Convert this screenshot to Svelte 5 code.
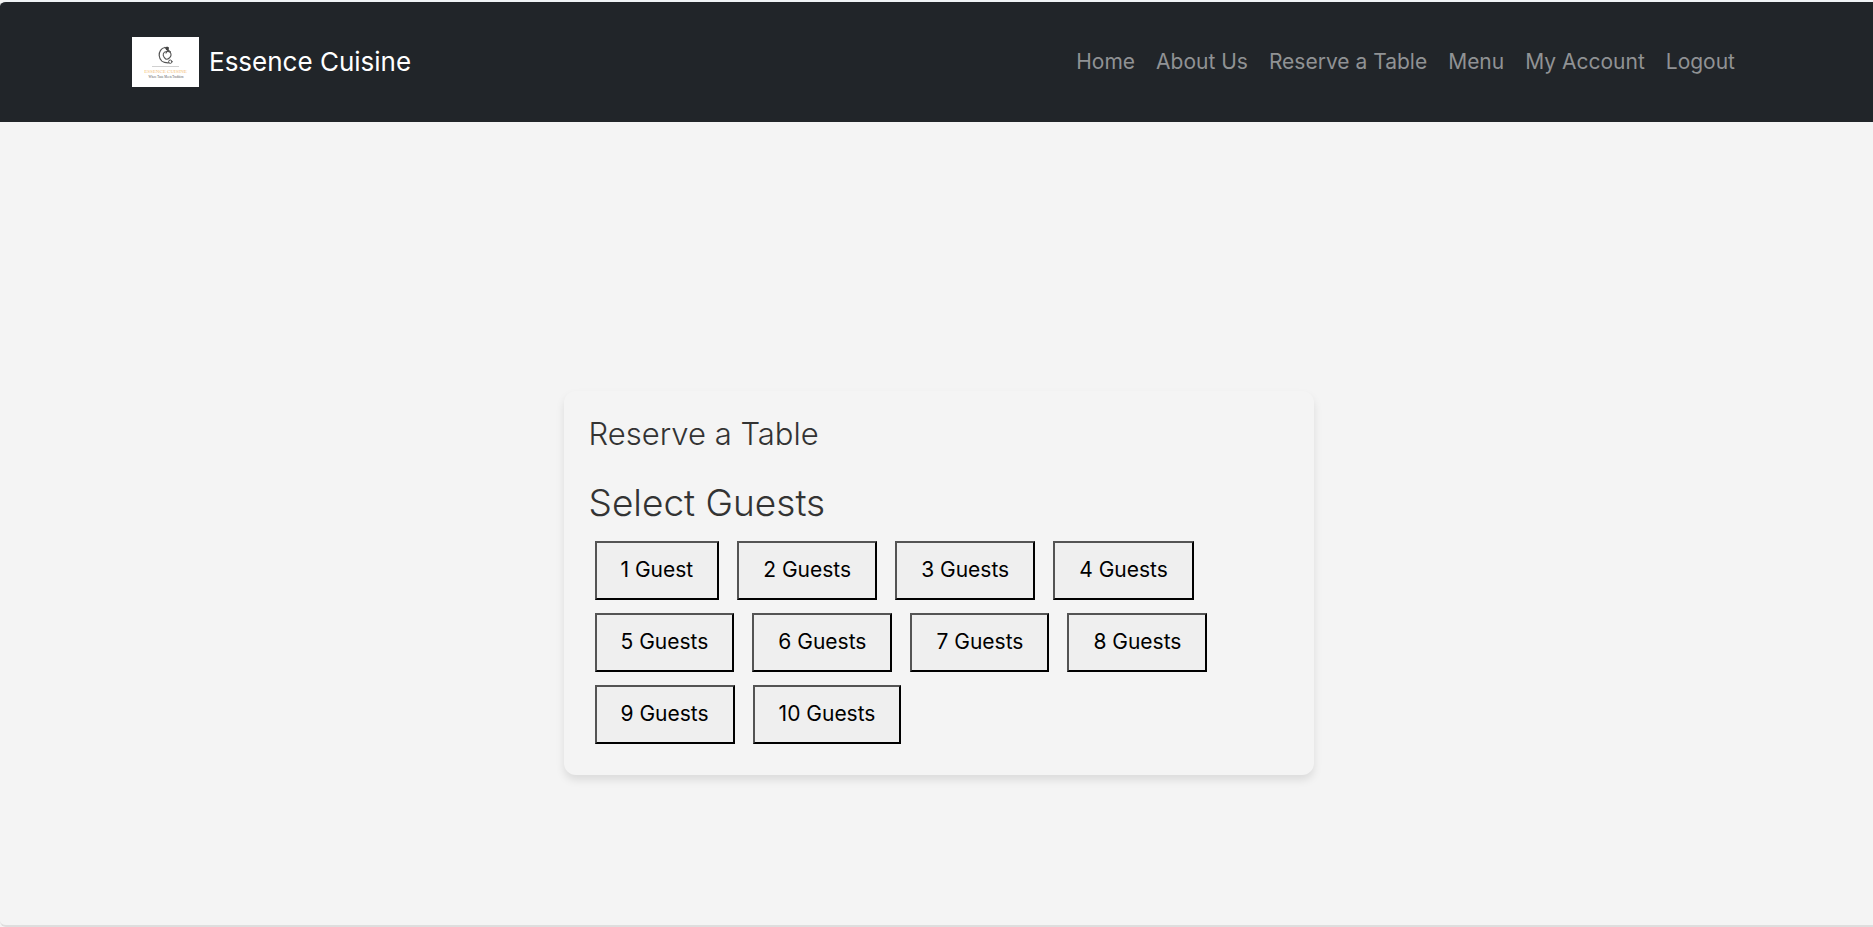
<script>
  const links = ['Home', 'About Us', 'Reserve a Table', 'Menu', 'My Account', 'Logout'];
  const guests = Array.from({ length: 10 }, (_, i) => i + 1);
  let selected = $state(0);
</script>

<div class="frame">
  <header>
    <nav class="bar" aria-label="Main">
      <a class="brand" href="#home">
        <svg class="logo" viewBox="0 0 67 50" aria-hidden="true">
          <rect width="67" height="50" fill="#fff" />
          <g fill="none" stroke="#555" stroke-linecap="round">
            <path d="M33 10.500C29 11 27 15 27.200 18.500C27.500 23 31 26 36.500 25.800" stroke-width="1.200" />
            <path d="M34.500 14.500C31 15 30.500 18 32 20C33 21.500 33.500 22.500 35 22.300C37 22 39.500 19.500 39 17C38.600 15 36.500 14 34.500 14.500Z" stroke-width="1.100" />
            <path d="M33 10.500L36 13L34 16M36 13L38.500 15" stroke-width="1.200" />
            <circle cx="38.300" cy="24.700" r="1.700" stroke-width="1" />
          </g>
          <path d="M33.500 10.500L35 9.500L37 10.500L36.500 13.500L34 13Z" fill="#444" />
          <path d="M20 29.500H47" stroke="#bbb" stroke-width="0.700" />
          <text class="logo-name" x="33.500" y="36" text-anchor="middle">ESSENCE CUISINE</text>
          <text class="logo-tag" x="34" y="40.500" text-anchor="middle">Where Taste Meets Tradition</text>
        </svg>
        <span>Essence Cuisine</span>
      </a>
      <ul>
        {#each links as link}
          <li><a href="#{link.toLowerCase().replaceAll(' ', '-')}">{link}</a></li>
        {/each}
      </ul>
    </nav>
  </header>
  <main>
    <section class="card">
      <h1>Reserve a Table</h1>
      <h2>Select Guests</h2>
      <div class="guests">
        {#each guests as n}
          <button type="button" aria-pressed={selected === n} onclick={() => (selected = n)}>
            {n} {n === 1 ? 'Guest' : 'Guests'}
          </button>
        {/each}
      </div>
    </section>
  </main>
</div>

<style>
  :global(body) {
    margin: 0;
    background: #f4f4f4;
  }
  .frame {
    box-sizing: border-box;
    height: 100vh;
    display: flex;
    flex-direction: column;
    overflow: hidden;
    border-top: 2px solid #f0f3f5;
    border-bottom: 2px solid #dedede;
    border-radius: 6px 0 0 6px;
    background: #f4f4f4;
    color: #333;
    font-family: Inter, sans-serif;
    font-size: 21px;
    line-height: 30px;
  }
  header {
    flex: none;
    background: #212529;
    padding: 35px 24px;
  }
  .bar {
    display: flex;
    align-items: center;
    justify-content: space-between;
    max-width: 1603px;
    margin: 0 auto;
    padding-right: 6px;
  }
  .brand {
    display: flex;
    align-items: center;
    gap: 10px;
    color: #fff;
    font-size: 26px;
    text-decoration: none;
  }
  .logo {
    width: 67px;
    height: 50px;
  }
  .logo-name {
    font: 5px "Liberation Serif", serif;
    fill: #f3c078;
  }
  .logo-tag {
    font: 3px "Liberation Serif", serif;
    fill: #555;
  }
  ul {
    display: flex;
    gap: 21px;
    margin: 0;
    padding: 0;
    list-style: none;
  }
  li a {
    color: #909294;
    text-decoration: none;
  }
  main {
    flex: 0 0 calc(100vh - 6px);
    display: flex;
    align-items: center;
    justify-content: center;
    padding-left: 4px;
  }
  .card {
    box-sizing: border-box;
    width: 100%;
    max-width: 750px;
    padding: 24px 25px 31px;
    border-radius: 12px;
    box-shadow: 0 5px 8px rgba(0, 0, 0, 0.1);
  }
  h1,
  h2 {
    margin: 0;
    font-weight: 300;
  }
  h1 {
    font-size: 31px;
    line-height: 37px;
    margin-bottom: 30px;
  }
  h2 {
    font-size: 37px;
    line-height: 42px;
    margin-bottom: 17px;
  }
  .guests {
    display: flex;
    flex-wrap: wrap;
    gap: 13px 18px;
    padding: 0 6px;
  }
  button {
    height: 59px;
    padding: 0 24px;
    border: 2px outset #000;
    background: #efefef;
    color: #000;
    font: inherit;
    font-weight: 400;
  }
</style>
